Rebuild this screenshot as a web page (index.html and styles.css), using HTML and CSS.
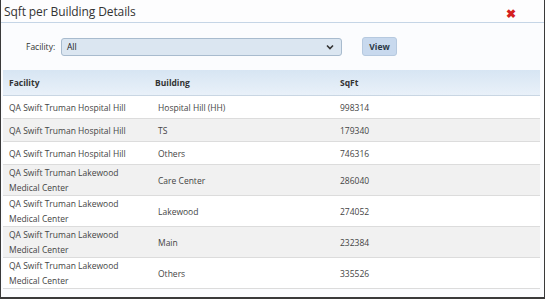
FILE: index.html
```html
<!DOCTYPE html>
<html>
<head>
<meta charset="utf-8">
<link rel="stylesheet" href="styles.css">
</head>
<body>
<div class="dialog">
  <div class="titlebar">
    <span class="title">Sqft per Building Details</span>
    <span class="close">&#10006;</span>
  </div>
  <div class="filter">
    <label class="flabel">Facility:</label>
    <div class="select"><span>All</span>
      <svg class="chev" width="8" height="6" viewBox="0 0 8 6"><path d="M1 1.5 L4 4.5 L7 1.5" fill="none" stroke="#333" stroke-width="1.6"/></svg>
    </div>
    <button class="btn">View</button>
  </div>
  <table class="grid">
    <thead>
      <tr><th class="c1">Facility</th><th class="c2">Building</th><th class="c3">SqFt</th></tr>
    </thead>
    <tbody>
      <tr><td>QA Swift Truman Hospital Hill</td><td class="b">Hospital Hill (HH)</td><td>998314</td></tr>
      <tr class="alt"><td>QA Swift Truman Hospital Hill</td><td class="b">TS</td><td>179340</td></tr>
      <tr><td>QA Swift Truman Hospital Hill</td><td class="b">Others</td><td>746316</td></tr>
      <tr class="alt two"><td>QA Swift Truman Lakewood<br>Medical Center</td><td class="b">Care Center</td><td>286040</td></tr>
      <tr class="two"><td>QA Swift Truman Lakewood<br>Medical Center</td><td class="b">Lakewood</td><td>274052</td></tr>
      <tr class="alt two"><td>QA Swift Truman Lakewood<br>Medical Center</td><td class="b">Main</td><td>232384</td></tr>
      <tr class="two"><td>QA Swift Truman Lakewood<br>Medical Center</td><td class="b">Others</td><td>335526</td></tr>
    </tbody>
  </table>
</div>
</body>
</html>
```
FILE: styles.css
```css
html, body { margin: 0; padding: 0; background: #fff; }
body { font-family: "Open Sans", "Noto Sans", sans-serif; }
.dialog {
  width: 545px; height: 299px; box-sizing: border-box;
  border: 1px solid #3a3a3a; border-top: none; border-bottom-width: 2px;
  background: #fbfcfe; overflow: hidden;
}
.titlebar {
  height: 22px; display: flex; align-items: center; justify-content: space-between;
  padding: 0 28px 0 3px; border-bottom: 1px solid #c5d5e6; background: #fdfdfe;
}
.title { font-size: 12px; color: #333; letter-spacing: -0.1px; }
.close { color: #d42020; font-size: 12px; font-weight: bold; margin-top: 4px; }
.filter {
  display: flex; align-items: center; height: 47px; padding-left: 25px;
}
.flabel { font-size: 8.5px; color: #333; width: 32px; margin-right: 3px; }
.select {
  width: 281px; height: 18px; box-sizing: border-box; border: 1px solid #a8bbce; border-radius: 3px;
  background: #dbe6f1; display: flex; align-items: center; justify-content: space-between;
  padding: 0 7px 0 5px; font-size: 8.5px; color: #222;
}
.btn {
  margin-left: 20px; width: 35px; height: 19px; border: 1px solid #b6c9df; border-radius: 3px;
  background: #c8d9ee; font-family: inherit; font-weight: bold; font-size: 8.5px; color: #2b3847; padding: 0;
}
.grid {
  margin: 0 0 0 2px; width: 537px; border-collapse: collapse; font-size: 8.5px; color: #444;
}
.grid th {
  height: 25px; text-align: left; font-weight: bold; color: #333; padding: 0 0 0 6px;
  background: linear-gradient(#d7e5f3, #e9f1f9); border-bottom: 1px solid #c9d6e3;
}
.c1 { width: 140px; } .c2 { width: 179px; }
.grid td { height: 22px; padding: 0 0 0 6px; border-bottom: 1px solid #dcdcdc; line-height: 15px; background: #fff; }
.grid td.b { padding-left: 9px; }
.grid tr.alt td { background: #f1f1f1; }
.grid tr.two td { height: 30px; }
```
